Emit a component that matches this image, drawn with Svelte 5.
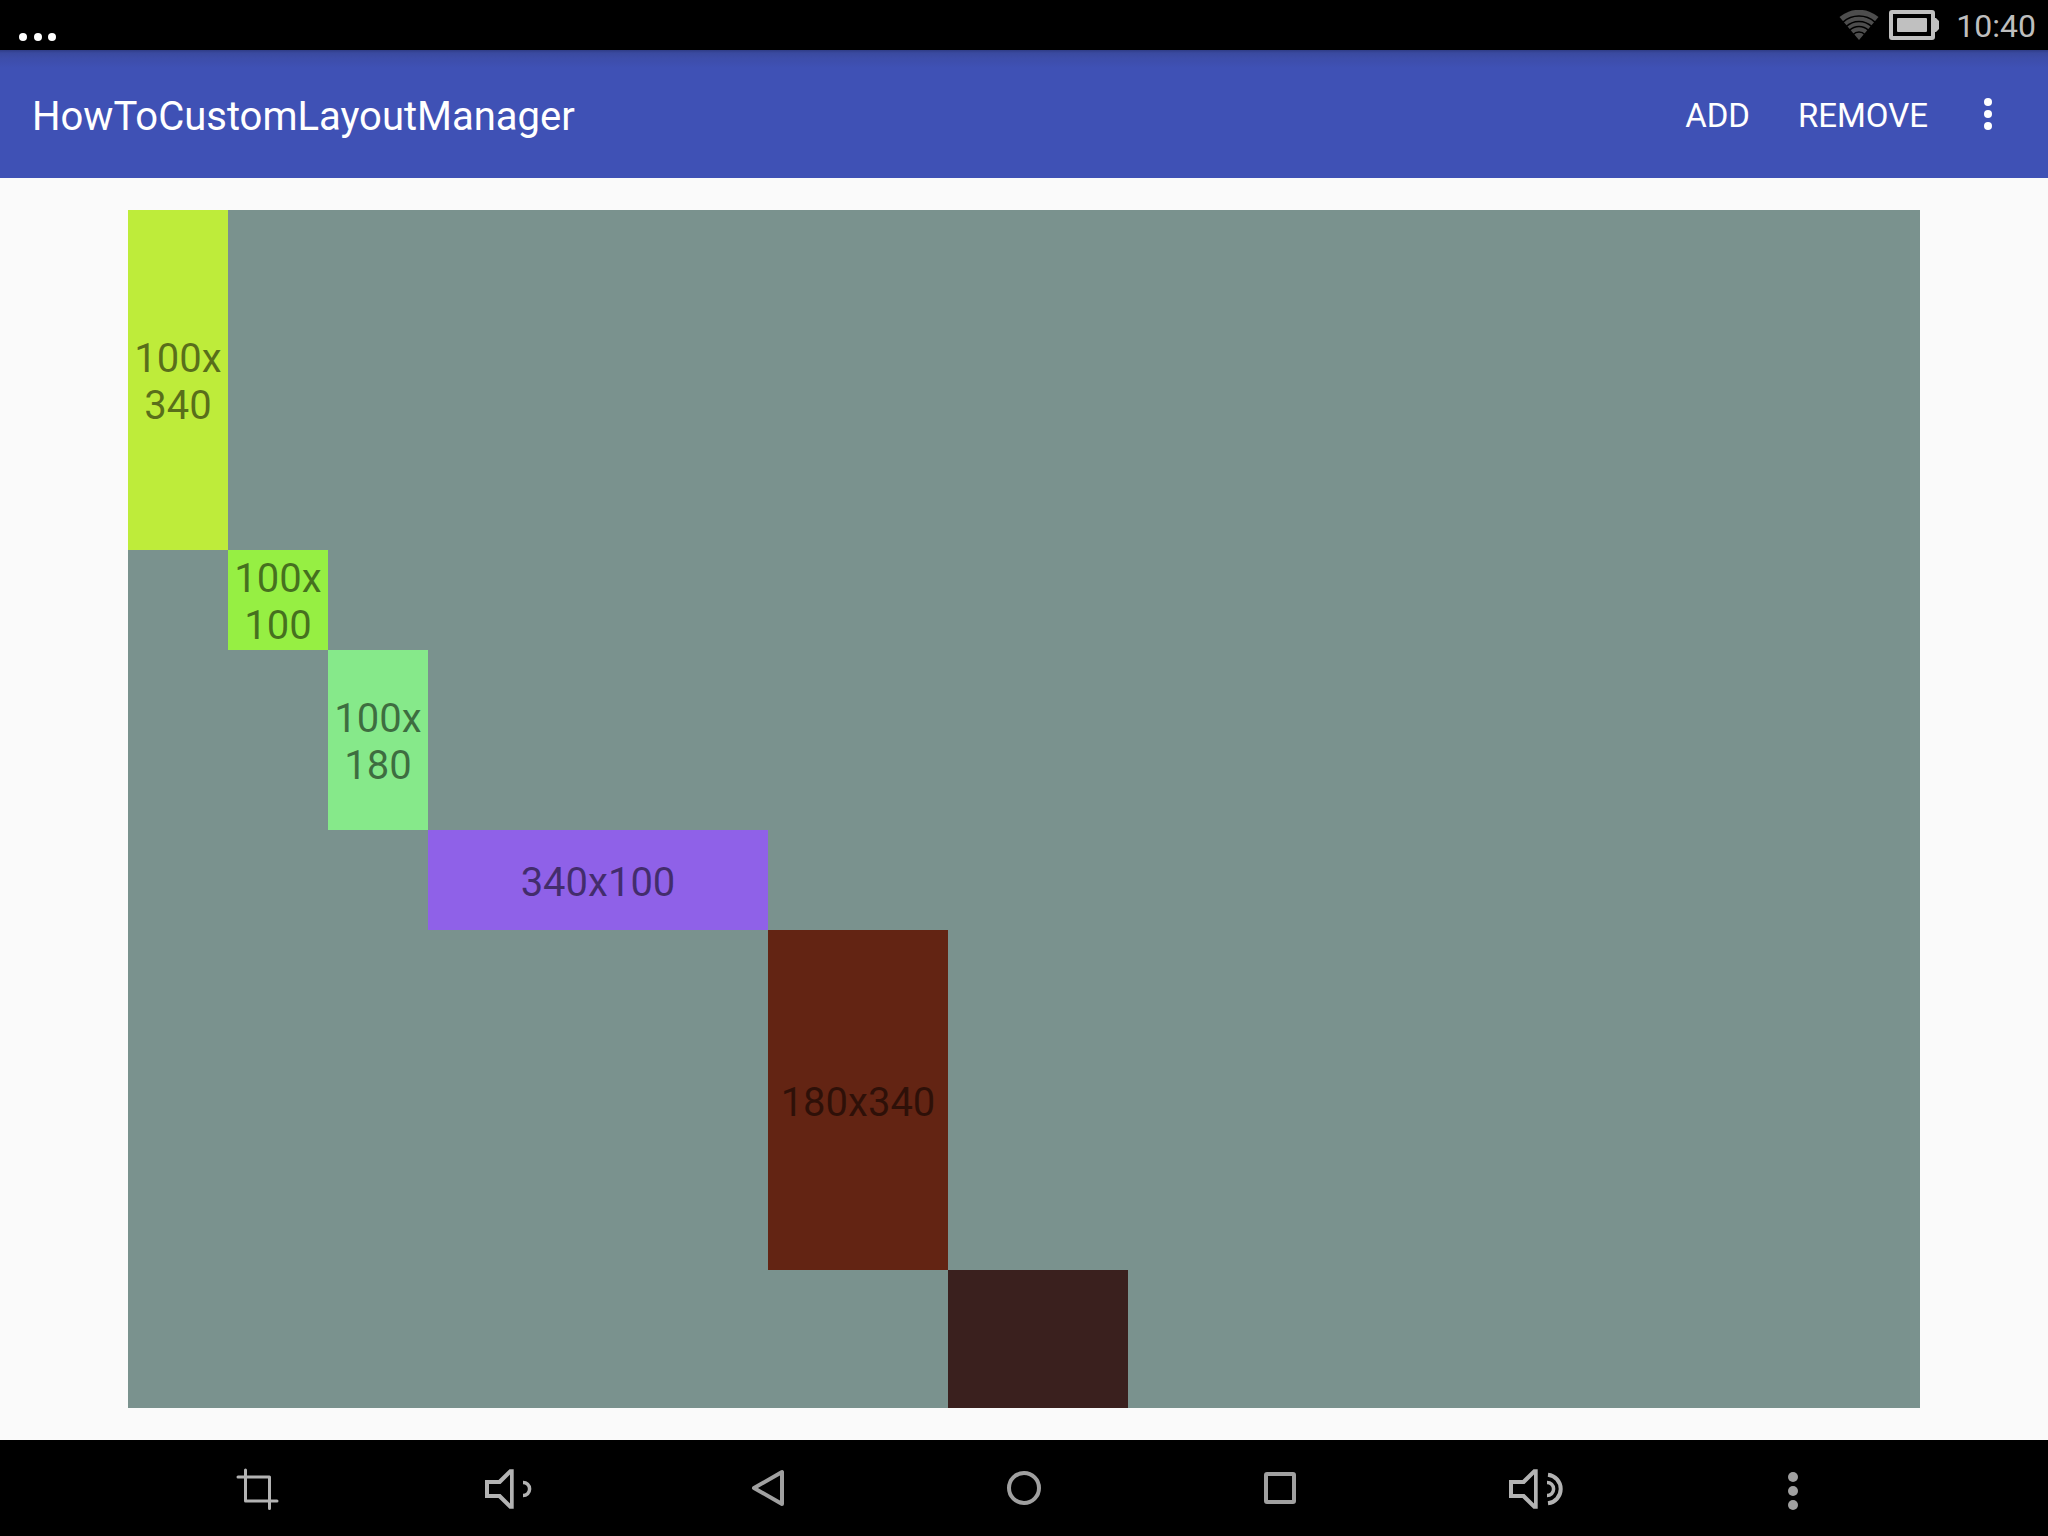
<script>
  const items = [
    { w: 100, h: 340, color: '#beec3a', label: '100x340' },
    { w: 100, h: 100, color: '#96ef43', label: '100x100' },
    { w: 100, h: 180, color: '#86e98a', label: '100x180' },
    { w: 340, h: 100, color: '#8f61e8', label: '340x100' },
    { w: 180, h: 340, color: '#632413', label: '180x340' },
    { w: 180, h: 340, color: '#3a201e', label: '' }
  ];
  const columns = items.map((i) => `${i.w}px`).join(' ');
  const rows = items.map((i) => `${i.h}px`).join(' ');
</script>

{#snippet speaker()}
  <path
    class="solid"
    fill-rule="evenodd"
    d="M5 24H18.500L29.500 13.300H33.700V52.700H29.500L18.500 42H5ZM9 28V38H20.500L30 47.500V18.500L20.500 28Z"
  />
  <path d="M43 26.400A6.600 6.600 0 0 1 43 39.600" stroke-width="3.500" />
{/snippet}

<div class="screen">
  <div class="status">
    <svg class="more" width="40" height="10" viewBox="0 0 40 10" fill="#fff" aria-hidden="true">
      <circle cx="5" cy="5" r="4" /><circle cx="20" cy="5" r="4" /><circle cx="34" cy="5" r="4" />
    </svg>
    <div class="system">
      <svg width="40" height="30" viewBox="0 0 40 30" aria-label="Wi-Fi">
        <path d="M20 30 .5 7A30 30 0 0 1 39.500 7Z" fill="#4d4d4d" />
        <g fill="none" stroke="#000" stroke-width="1.500">
          <path d="M4 12.100A24 24 0 0 1 36 12.100" />
          <path d="M7 16.800A18.500 18.500 0 0 1 33 16.800" />
          <path d="M10.500 20.400A13.500 13.500 0 0 1 29.500 20.400" />
          <path d="M14 24.700A8 8 0 0 1 26 24.700" />
        </g>
      </svg>
      <svg width="50" height="30" viewBox="0 0 50 30" fill="#c0c0c0" aria-label="Battery">
        <path fill-rule="evenodd" d="M3 0H43a3 3 0 0 1 3 3V8h1l3 3v8l-3 3h-1v5a3 3 0 0 1-3 3H3a3 3 0 0 1-3-3V3a3 3 0 0 1 3-3ZM4 4V26H42V4Z" />
        <rect x="8" y="8" width="30" height="14" rx="1" />
      </svg>
      <time class="clock">10:40</time>
    </div>
  </div>

  <header class="toolbar">
    <h1>HowToCustomLayoutManager</h1>
    <button class="action">ADD</button>
    <button class="action">REMOVE</button>
    <button class="overflow" aria-label="More options">
      <svg width="8" height="32" viewBox="0 0 8 32" fill="#fff">
        <circle cx="4" cy="4" r="4" /><circle cx="4" cy="16" r="4" /><circle cx="4" cy="28" r="4" />
      </svg>
    </button>
  </header>

  <main>
    <ul class="list" style="grid-template-columns: {columns}; grid-template-rows: {rows}">
      {#each items as item, i}
        <li style="grid-area: {i + 1} / {i + 1}; background: {item.color}">{item.label}</li>
      {/each}
    </ul>
  </main>

  <nav>
    <button aria-label="Screenshot">
      <svg viewBox="0 0 64 64" stroke-width="3" stroke-linecap="round" stroke-linejoin="round">
        <path d="M14 21H45.500V52.500M21.500 14V45H53" />
      </svg>
    </button>
    <button aria-label="Volume down">
      <svg viewBox="0 0 64 64">{@render speaker()}</svg>
    </button>
    <button aria-label="Back">
      <svg viewBox="0 0 64 64" class="dim" stroke-width="4" stroke-linejoin="round">
        <path d="M46 16V48L18 32Z" />
      </svg>
    </button>
    <button aria-label="Home">
      <svg viewBox="0 0 64 64" class="dim" stroke-width="4"><circle cx="32" cy="32" r="15" /></svg>
    </button>
    <button aria-label="Recent apps">
      <svg viewBox="0 0 64 64" class="dim" stroke-width="4"><rect x="18" y="18" width="28" height="28" rx="1" /></svg>
    </button>
    <button aria-label="Volume up">
      <svg viewBox="0 0 64 64">
        {@render speaker()}
        <path d="M44 18.700A14.400 14.400 0 0 1 44 47.300" stroke-width="4" />
      </svg>
    </button>
    <button aria-label="Menu">
      <svg viewBox="0 0 64 64" class="dots">
        <circle cx="33" cy="21" r="5" /><circle cx="33" cy="35" r="5" /><circle cx="33" cy="49" r="5" />
      </svg>
    </button>
  </nav>
</div>

<style>
  :global(body) { margin: 0; background: #fafafa; }
  .screen {
    height: 100vh;
    display: flex;
    flex-direction: column;
    font-family: Roboto, "Liberation Sans", sans-serif;
  }
  button { border: 0; padding: 0; background: none; color: inherit; font: inherit; }
  svg { display: block; }
  .status {
    height: 50px;
    flex: none;
    box-sizing: border-box;
    padding: 0 12px 0 18px;
    display: flex;
    justify-content: space-between;
    background: #000;
  }
  .more { align-self: flex-end; margin-bottom: 8px; }
  .system { display: flex; align-items: center; }
  .system svg + svg { margin-left: 10px; margin-right: 17px; }
  .clock { font-size: 32px; line-height: 38px; padding-top: 2px; color: #bebebe; }
  .toolbar {
    height: 128px;
    flex: none;
    box-sizing: border-box;
    padding: 0 24px 0 32px;
    display: flex;
    align-items: center;
    background: linear-gradient(#2f3c87, #3a4a9f 3px, #3d4da9 8px, #3f51b5 18px);
    color: #fff;
  }
  h1 { flex: 1; margin: 0; padding-top: 6px; font-size: 40px; line-height: 48px; font-weight: 400; }
  .action { height: 96px; padding: 2px 24px 0; font-size: 33px; }
  .overflow { width: 72px; height: 96px; display: flex; align-items: center; justify-content: center; }
  main { flex: 1; min-height: 0; display: flex; padding: 32px 128px; }
  .list {
    flex: 1;
    margin: 0;
    padding: 0;
    list-style: none;
    display: grid;
    overflow: hidden;
    background: #7a928e;
  }
  li {
    display: flex;
    align-items: center;
    justify-content: center;
    box-sizing: border-box;
    padding-top: 4px;
    text-align: center;
    word-break: break-all;
    font-size: 40px;
    line-height: 47px;
    color: rgba(0, 0, 0, 0.54);
  }
  nav { height: 96px; flex: none; padding: 0 128px; display: flex; background: #000; }
  nav button { flex: 1; display: flex; align-items: center; justify-content: center; }
  nav svg { width: 64px; height: 64px; fill: none; stroke: #b3b3b3; }
  nav svg.dim { stroke: #a0a0a0; }
  nav svg.dots { fill: #a0a0a0; stroke: none; }
  .solid { fill: #b3b3b3; stroke: none; }
</style>
